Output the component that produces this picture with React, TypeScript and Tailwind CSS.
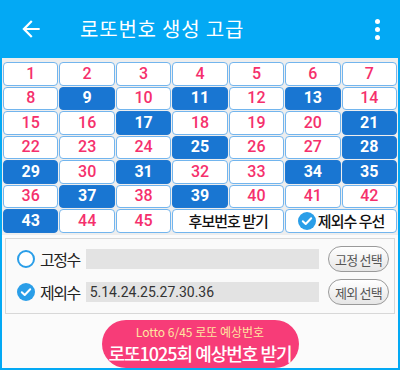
import React from "react";

const selected = new Set([9, 11, 13, 17, 21, 25, 28, 29, 31, 34, 35, 37, 39, 43]);

function Cell({ n }: { n: number }) {
  const sel = selected.has(n);
  return (
    <div
      className={
        sel
          ? "h-[23.5px] rounded-[4px] border-[1.5px] border-[#1f78d1] bg-[#1976d2] flex items-center justify-center text-white font-bold text-[16px]"
          : "h-[23.5px] rounded-[4px] border-[1.5px] border-[#72b5ee] bg-white flex items-center justify-center text-[#f5306c] text-[16px] font-medium"
      }
      style={{ fontFamily: "Roboto, 'Noto Sans CJK KR', sans-serif" }}
    >
      {n}
    </div>
  );
}

function CheckCircle() {
  return (
    <svg width="18" height="18" viewBox="0 0 18 18" className="shrink-0">
      <circle cx="9" cy="9" r="9" fill="#2a9ee8" />
      <path d="M4.8 9.3 L7.7 12 L13.2 6.2" stroke="white" strokeWidth="2" fill="none" strokeLinecap="round" strokeLinejoin="round" />
    </svg>
  );
}

export default function App() {
  const nums = Array.from({ length: 42 }, (_, i) => i + 1);
  const kr = { fontFamily: "'Noto Sans CJK KR', Roboto, sans-serif" };
  return (
    <div className="w-[400px] h-[370px] bg-[#03a9f4] flex flex-col overflow-hidden" style={kr}>
      <div className="h-[58px] flex items-center pl-[18px] pr-[22px] shrink-0">
        <svg width="26" height="26" viewBox="0 0 24 24" className="shrink-0">
          <path d="M20 11H7.83l5.59-5.59L12 4l-8 8 8 8 1.41-1.41L7.83 13H20v-2z" fill="white" />
        </svg>
        <div className="ml-[36px] text-white text-[20px] font-normal tracking-[0.8px] leading-none whitespace-nowrap">로또번호 생성 고급</div>
        <div className="ml-auto mr-[-2px] flex flex-col gap-[3px] items-center">
          <span className="w-[5px] h-[5px] rounded-full bg-white" />
          <span className="w-[5px] h-[5px] rounded-full bg-white" />
          <span className="w-[5px] h-[5px] rounded-full bg-white" />
        </div>
      </div>
      <div className="flex-1 mx-[2px] mb-[2px] bg-[#fbfbfb] flex flex-col">
        <div className="bg-[#eeeeee] px-[1px] pt-[4px] pb-[2px]">
          <div className="grid grid-cols-7 gap-[1px]">
            {nums.map((n) => (
              <Cell key={n} n={n} />
            ))}
            <Cell n={43} />
            <Cell n={44} />
            <Cell n={45} />
            <div className="col-span-2 h-[23.5px] rounded-[4px] border-[1.5px] border-[#72b5ee] bg-white flex items-center justify-center text-[#111] text-[15px] tracking-[-1px] font-medium whitespace-nowrap">
              후보번호 받기
            </div>
            <div className="col-span-2 h-[23.5px] rounded-[4px] border-[1.5px] border-[#72b5ee] bg-white flex items-center justify-center gap-[2px] text-[#111] text-[15px] tracking-[-1px] font-medium whitespace-nowrap">
              <CheckCircle />
              <span>제외수 우선</span>
            </div>
          </div>
        </div>
        <div className="mx-[3px] mt-[3px] h-[76px] border border-[#d8d8d8] bg-[#fafafa] flex flex-col justify-center gap-[7px] pl-[11px] pr-[5px]">
          <div className="flex items-center h-[26px]">
            <span className="w-[18px] h-[18px] rounded-full border-2 border-[#2a9ee8] bg-white shrink-0" />
            <span className="ml-[5px] text-[16px] tracking-[-1.5px] text-[#222] whitespace-nowrap shrink-0">고정수</span>
            <div className="ml-[6px] flex-1 h-[20px] bg-[#e3e3e3]" />
            <button className="ml-[9px] shrink-0 h-[26px] w-[61px] rounded-[13px] border border-[#9a9a9a] bg-gradient-to-b from-white to-[#e6e6e6] text-[13px] tracking-[-0.8px] text-[#555] leading-none whitespace-nowrap">
              고정 선택
            </button>
          </div>
          <div className="flex items-center h-[26px]">
            <CheckCircle />
            <span className="ml-[5px] text-[16px] tracking-[-1.5px] text-[#222] whitespace-nowrap shrink-0">제외수</span>
            <div
              className="ml-[6px] flex-1 h-[20px] bg-[#e3e3e3] flex items-center pl-[4px] text-[14px] text-[#333] whitespace-nowrap"
              style={{ fontFamily: "Roboto, sans-serif" }}
            >
              5.14.24.25.27.30.36
            </div>
            <button className="ml-[9px] shrink-0 h-[26px] w-[61px] rounded-[13px] border border-[#9a9a9a] bg-gradient-to-b from-white to-[#e6e6e6] text-[13px] tracking-[-0.8px] text-[#555] leading-none whitespace-nowrap">
              제외 선택
            </button>
          </div>
        </div>
        <div className="flex-1 flex items-end justify-center">
          <div className="w-[197px] h-[48px] rounded-full bg-[#f73c78] flex flex-col items-center justify-center">
            <div className="text-[12px] leading-[17px] text-[#ffe6a0] whitespace-nowrap">Lotto 6/45 로또 예상번호</div>
            <div className="text-[18px] leading-[26px] tracking-[-1px] text-white font-medium whitespace-nowrap">로또1025회 예상번호 받기</div>
          </div>
        </div>
      </div>
    </div>
  );
}
